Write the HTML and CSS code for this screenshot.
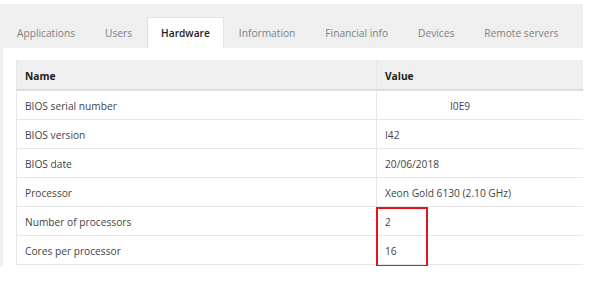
FILE: index.html
```html
<!DOCTYPE html>
<html>
<head>
<meta charset="utf-8">
<link rel="stylesheet" href="styles.css">
</head>
<body>
<div class="panel">
  <div class="tabs">
    <div class="tab">Applications</div>
    <div class="tab">Users</div>
    <div class="tab active">Hardware</div>
    <div class="tab">Information</div>
    <div class="tab">Financial info</div>
    <div class="tab">Devices</div>
    <div class="tab">Remote servers</div>
  </div>
  <div class="content">
    <div class="table-wrap">
      <table class="grid">
        <thead>
          <tr><th class="c-name">Name</th><th class="c-val">Value</th></tr>
        </thead>
        <tbody>
          <tr><td>BIOS serial number</td><td class="redacted">I0E9</td></tr>
          <tr><td>BIOS version</td><td>I42</td></tr>
          <tr><td>BIOS date</td><td>20/06/2018</td></tr>
          <tr><td>Processor</td><td>Xeon Gold 6130 (2.10 GHz)</td></tr>
          <tr><td>Number of processors</td><td>2</td></tr>
          <tr><td>Cores per processor</td><td>16</td></tr>
        </tbody>
      </table>
      <div class="highlight"></div>
    </div>
  </div>
</div>
</body>
</html>
```
FILE: styles.css
```css
html, body {
  margin: 0;
  padding: 0;
  background: #ffffff;
}
body {
  font-family: "Open Sans", "Noto Sans", sans-serif;
  font-size: 10.2px;
  color: #444;
}
.panel {
  margin-top: 4px;
  width: 581px;
  padding-left: 2px;
  background: #efefef;
}
.tabs {
  display: flex;
  align-items: flex-end;
  height: 44px;
}
.tab {
  flex-shrink: 0;
  white-space: nowrap;
  height: 31px;
  line-height: 32px;
  padding: 0 15px;
  color: #808080;
  box-sizing: border-box;
}
.tab.active {
  background: #fff;
  color: #222;
  font-weight: 600;
  border: 1px solid #e2e2e2;
  border-bottom: none;
  padding: 0 13px;
  line-height: 31px;
}
.content {
  margin-left: 1px;
  background: #fff;
  padding: 12px 0 1px 13px;
}
.table-wrap {
  position: relative;
}
.grid {
  width: 100%;
  border-collapse: collapse;
  border-left: 1px solid #e6e6e6;
}
.grid th {
  background: #efefef;
  text-align: left;
  font-weight: 700;
  color: #222;
  height: 27px;
  padding: 2px 8px 0;
  border-bottom: 2px solid #dcdcdc;
}
.grid td {
  height: 26px;
  padding: 2px 8px 0;
  border-bottom: 1px solid #e6e6e6;
}
.grid .c-name {
  width: 343px;
}
.grid th + th, .grid td + td {
  border-left: 1px solid #e6e6e6;
}
.grid td.redacted {
  padding-left: 73px;
}
.highlight {
  position: absolute;
  left: 360px;
  top: 147px;
  width: 48px;
  height: 56px;
  border: 2px solid #e8141b;
  box-sizing: content-box;
}
```
